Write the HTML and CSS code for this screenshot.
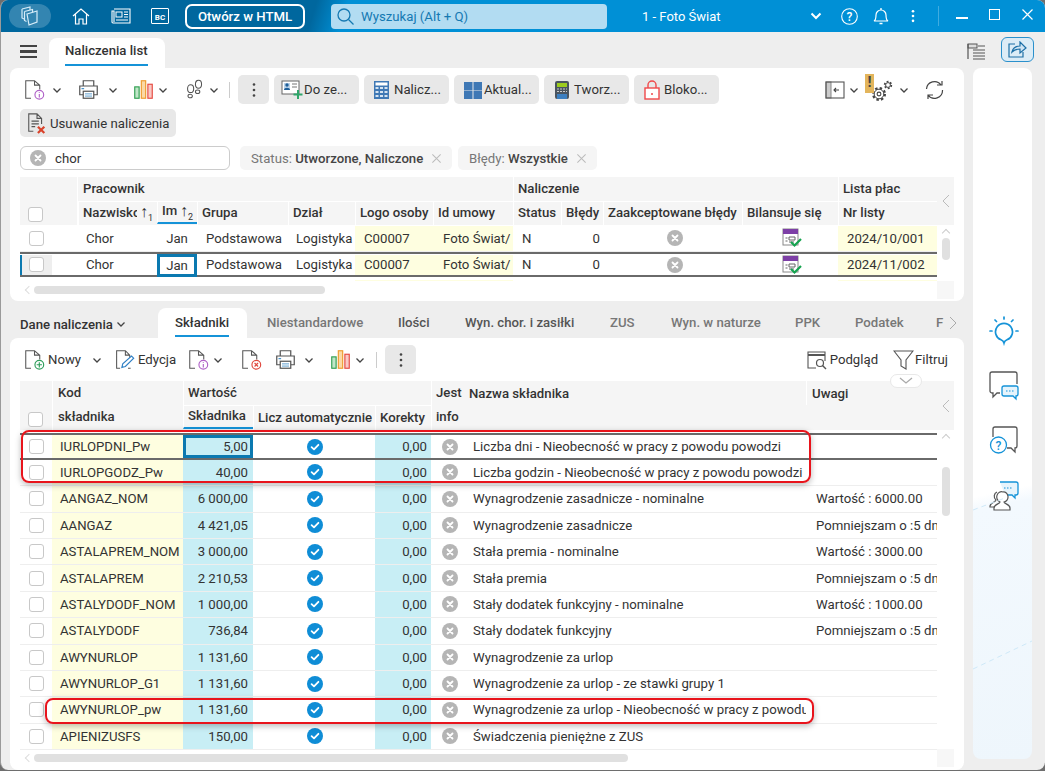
FILE: index.html
```html
<!DOCTYPE html>
<html lang="pl">
<head>
<meta charset="utf-8">
<title>Naliczenia list</title>
<link rel="stylesheet" href="styles.css">
</head>
<body>
<svg class="defs" width="0" height="0" aria-hidden="true">
  <symbol id="chev" viewBox="0 0 10 10"><path d="M1.500 3.500 5 7l3.500-3.500" fill="none" stroke="#444" stroke-width="1.300"/></symbol>
  <symbol id="xc" viewBox="0 0 16 16"><circle cx="8" cy="8" r="8" fill="#b5b5b5"/><path d="M5.500 5.500l5 5m0-5l-5 5" stroke="#fff" stroke-width="1.800" stroke-linecap="round"/></symbol>
  <symbol id="ok" viewBox="0 0 16 16"><circle cx="8" cy="8" r="8" fill="#0f8dd6"/><path d="M4.600 8.200 7 10.400l4.400-4.600" fill="none" stroke="#fff" stroke-width="1.800" stroke-linecap="round" stroke-linejoin="round"/></symbol>
  <symbol id="docinfo" viewBox="0 0 24 24"><path d="M8 22H2V2h10l6 5v5M12 2v5h6" fill="none" stroke="#555" stroke-width="1.200"/><circle cx="17.500" cy="18" r="5" fill="#fff" stroke="#b062c8" stroke-width="1.300"/><path d="M17.500 17v4M17.500 15v1" stroke="#b062c8" stroke-width="1.300"/></symbol>
  <symbol id="docplus" viewBox="0 0 24 24"><path d="M8 22H2V2h10l6 5v5M12 2v5h6" fill="none" stroke="#555" stroke-width="1.200"/><circle cx="17.500" cy="18" r="5" fill="#fff" stroke="#2f9e5b" stroke-width="1.300"/><path d="M17.500 15v6M14.500 18h6" stroke="#2f9e5b" stroke-width="1.300"/></symbol>
  <symbol id="docx" viewBox="0 0 24 24"><path d="M8 22H2V2h10l6 5v5M12 2v5h6" fill="none" stroke="#555" stroke-width="1.200"/><circle cx="17.500" cy="18" r="5" fill="#fff" stroke="#e0483e" stroke-width="1.300"/><path d="M15.500 16l4 4m0-4l-4 4" stroke="#e0483e" stroke-width="1.300"/></symbol>
  <symbol id="docedit" viewBox="0 0 24 24"><path d="M7 22H3V2h10l5 5v4M13 2v5h5M16 22h3" fill="none" stroke="#555" stroke-width="1.200"/><path d="M9 21l1-4L20 8l2.500 2.500L13 20z" fill="#fff" stroke="#2f7fc4" stroke-width="1.300"/></symbol>
  <symbol id="print" viewBox="0 0 24 24"><path d="M6 8V2h12v6M6 18H2V8h20v10h-4" fill="none" stroke="#555" stroke-width="1.400"/><rect x="6" y="14" width="12" height="8" fill="#fff" stroke="#555" stroke-width="1.400"/><path d="M8 17h8M8 19.500h8" stroke="#4a93c9"/><path d="M4 11h3" stroke="#4a93c9" stroke-width="1.400"/></symbol>
  <symbol id="chart" viewBox="0 0 24 24"><rect x="2" y="9" width="5" height="13" fill="#bfe6c8" stroke="#2f9e4f" stroke-width="1.300"/><rect x="9.500" y="2" width="5" height="20" fill="#fbd9a6" stroke="#ef9a2b" stroke-width="1.300"/><rect x="17" y="6" width="5" height="16" fill="#f9c9c5" stroke="#e5483f" stroke-width="1.300"/></symbol>
  <symbol id="steps" viewBox="0 0 20 24"><g fill="none" stroke="#555" stroke-width="1.200"><ellipse cx="5" cy="11" rx="3.500" ry="4.500"/><ellipse cx="14" cy="6" rx="3.500" ry="4.500"/><ellipse cx="4.500" cy="19.500" rx="2.500" ry="2"/><ellipse cx="13" cy="14.500" rx="2.500" ry="2"/></g></symbol>
  <symbol id="kebab" viewBox="0 0 4 16"><circle cx="2" cy="2.500" r="1.300" fill="#444"/><circle cx="2" cy="8" r="1.300" fill="#444"/><circle cx="2" cy="13.500" r="1.300" fill="#444"/></symbol>
  <symbol id="close" viewBox="0 0 12 12"><path d="M1.500 1.500l9 9m0-9l-9 9" stroke="#bbb" stroke-width="1.100"/></symbol>
  <symbol id="bil" viewBox="0 0 20 20"><rect x="1" y="1" width="15" height="16" fill="#fff" stroke="#888"/><rect x="1" y="1" width="15" height="5" fill="#7d3fa6"/><path d="M3.500 10h2M3.500 13h2M7 9h6v3H7zM7 14h5" fill="none" stroke="#666"/><path d="M9 14l3.500 3.500L19 11" fill="none" stroke="#15a34f" stroke-width="2.200"/></symbol>
</svg>

<div class="window">
  <header class="titlebar">
    <span class="brand"><svg width="22" height="20" viewBox="0 0 22 20"><g fill="none" stroke="#d6ecf8" stroke-width="1.200"><path d="M3 3l8-2v3M3 3v9l2 1"/><path d="M5.500 5.500l8-2v3M5.500 5.500v9l2 1"/><path d="M8 8l10-3v11l-8 3z"/></g></svg></span>
    <span class="ticon home"><svg width="18" height="18" viewBox="0 0 18 18"><path d="M1 9l8-7 8 7M3.500 7.500V17h3.500v-5h4v5h3.500V7.500" fill="none" stroke="#fff" stroke-width="1.200"/></svg></span>
    <span class="ticon news"><svg width="20" height="16" viewBox="0 0 20 16"><path d="M3 1h16v14H2a1 1 0 0 1-1-1V3h2v11" fill="none" stroke="#fff" stroke-width="1.100"/><rect x="5" y="4" width="6" height="5" fill="none" stroke="#fff"/><path d="M13 4h4M13 6.500h4M13 9h4M5 12h12" stroke="#fff"/></svg></span>
    <span class="bc">BC</span>
    <button class="html-btn">Otwórz w HTML</button>
    <div class="global-search"><svg width="17" height="17" viewBox="0 0 17 17"><circle cx="7" cy="7" r="6" fill="none" stroke="#1579b2" stroke-width="1.300"/><path d="M11.500 11.500l5 5" stroke="#1579b2" stroke-width="1.300"/></svg><span>Wyszukaj (Alt + Q)</span></div>
    <span class="company">1 - Foto Świat</span>
    <svg class="tchev" width="12" height="8" viewBox="0 0 12 8"><path d="M1.500 1.500 6 6l4.500-4.500" fill="none" stroke="#fff" stroke-width="2"/></svg>
    <svg class="thelp" width="17" height="17" viewBox="0 0 17 17"><circle cx="8.500" cy="8.500" r="7.800" fill="none" stroke="#fff" stroke-width="1.100"/><text x="8.500" y="12.500" text-anchor="middle" class="qm">?</text></svg>
    <svg class="tbell" width="16" height="18" viewBox="0 0 16 18"><path d="M1 14c2-1 2-3 2-6a5 5 0 0 1 10 0c0 3 0 5 2 6z" fill="none" stroke="#fff" stroke-width="1.200"/><path d="M8 1v2M6.500 16.500h3" stroke="#fff" stroke-width="1.300"/></svg>
    <svg class="tkeb" width="4" height="14" viewBox="0 0 4 16"><circle cx="2" cy="2.500" r="1.500" fill="#fff"/><circle cx="2" cy="8" r="1.500" fill="#fff"/><circle cx="2" cy="13.500" r="1.500" fill="#fff"/></svg>
    <span class="tsep"></span>
    <span class="wmin"></span>
    <span class="wmax"></span>
    <svg class="wclose" width="11" height="11" viewBox="0 0 11 11"><path d="M.5.500l10 10m0-10l-10 10" stroke="#fff" stroke-width="1.200"/></svg>
  </header>

  <div class="workspace">
    <main class="content">
      <div class="pagetabs">
        <span class="burger"><i></i><i></i><i></i></span>
        <span class="pagetab"><b>Naliczenia list</b></span>
        <svg class="listicon" width="18" height="17" viewBox="0 0 18 17"><rect x="1" y="1" width="9" height="4" fill="#ddd" stroke="#555"/><path d="M1 1v15M6 7h12M6 10h12M6 13h12M6 16h12M11 3h7" stroke="#555" stroke-width="1.200"/></svg>
        <span class="sharebtn"><svg width="19" height="17" viewBox="0 0 19 17"><path d="M7 3H1v13h14v-5" fill="none" stroke="#1c6fa6" stroke-width="1.200"/><path d="M4 11c1-4 4-6 8-6V1l6 6-6 5V8c-3 0-6 1-8 3z" fill="#cfe4f3" stroke="#1c6fa6" stroke-width="1.200"/></svg></span>
      </div>

      <section class="panel top-panel">
        <div class="toolbar t1">
          <span class="tool w-info"><svg class="i20"><use href="#docinfo"/></svg><svg class="chv"><use href="#chev"/></svg></span>
          <span class="tool w-print"><svg class="i20"><use href="#print"/></svg><svg class="chv"><use href="#chev"/></svg></span>
          <span class="tool w-chart"><svg class="i20"><use href="#chart"/></svg><svg class="chv"><use href="#chev"/></svg></span>
          <span class="tool w-steps"><svg class="i20"><use href="#steps"/></svg><svg class="chv"><use href="#chev"/></svg></span>
          <span class="vsep"></span>
          <span class="gbtn kebab"><svg width="4" height="16"><use href="#kebab"/></svg></span>
          <span class="gbtn act"><svg width="22" height="20" viewBox="0 0 22 20"><rect x="1" y="1" width="17" height="13" fill="#fff" stroke="#666"/><rect x="3" y="3" width="6" height="7" fill="#bcd4ea"/><circle cx="6" cy="5" r="1.700" fill="#1f5f99"/><path d="M3 10c0-3 6-3 6 0z" fill="#1f5f99"/><path d="M11 4h5M11 7h5" stroke="#777"/><path d="M17 10v9M12.500 14.500h9" stroke="#2fa66a" stroke-width="2"/></svg><span>Do ze...</span></span>
          <span class="gbtn act"><svg width="19" height="20" viewBox="0 0 19 20"><rect x="1" y="1" width="15" height="18" fill="#3f78b5"/><rect x="2.500" y="2.500" width="12" height="3" fill="#fff"/><path d="M2.500 8h12M2.500 12h12M2.500 16h12" stroke="#d5e3f1" stroke-width="2" stroke-dasharray="3 1.500"/></svg><span>Nalicz...</span></span>
          <span class="gbtn act"><svg width="19" height="18" viewBox="0 0 19 18"><rect width="8.500" height="8.500" x="1" y="1" fill="#3f78b5"/><rect width="8.500" height="8.500" x="10.500" y="1" fill="#3f78b5"/><rect width="8.500" height="8.500" x="1" y="10" fill="#3f78b5"/><rect width="8.500" height="8.500" x="10.500" y="10" fill="#3f78b5"/></svg><span>Aktual...</span></span>
          <span class="gbtn act"><svg width="19" height="20" viewBox="0 0 19 20"><rect x="2" y="1" width="14" height="18" rx="2" fill="#4a5560"/><rect x="4" y="3" width="10" height="4" fill="#9ccc1e"/><path d="M4 9h10M4 11.500h10" stroke="#ccc" stroke-dasharray="2 1"/><rect x="4" y="14" width="10" height="5" fill="#3c7fc0"/></svg><span>Tworz...</span></span>
          <span class="gbtn act"><svg width="19" height="20" viewBox="0 0 19 20"><rect x="2" y="8" width="14" height="11" fill="#fff" stroke="#f0494a" stroke-width="1.400"/><path d="M5 8V5a4 4 0 0 1 8 0v3" fill="none" stroke="#f0494a" stroke-width="1.400"/><circle cx="9" cy="14" r="1" fill="#f0494a"/></svg><span>Bloko...</span></span>
          <span class="right-tools">
            <span class="tool w-col"><svg width="20" height="18" viewBox="0 0 20 18"><rect x="1" y="1" width="5" height="16" fill="#ccc" stroke="#888"/><rect x="1" y="1" width="18" height="16" fill="none" stroke="#555" stroke-width="1.100"/><path d="M14 9H9m2-2-2 2 2 2" fill="none" stroke="#444" stroke-width="1.100"/></svg><svg class="chv"><use href="#chev"/></svg></span>
            <span class="tool w-gear"><span class="warn">!</span><svg class="gear" width="22" height="22" viewBox="0 0 22 22"><g fill="none" stroke="#444"><circle cx="8" cy="14" r="5.800" stroke-width="2.400" stroke-dasharray="2.400 2.150"/><circle cx="8" cy="14" r="4.800" stroke-width="1" fill="#fff"/><circle cx="8" cy="14" r="1.900" stroke-width="1.100"/><circle cx="17" cy="5" r="3.300" stroke-width="1.800" stroke-dasharray="1.800 1.650"/><circle cx="17" cy="5" r="2.400" stroke-width="1" fill="#fff"/></g></svg><svg class="chv"><use href="#chev"/></svg></span>
            <svg class="refresh" width="20" height="20" viewBox="0 0 20 20"><path d="M1.500 9A8 8 0 0 1 16 5m1.500 5A8 8 0 0 1 3 15M12 5h5V1M8 15H3v4" fill="none" stroke="#444" stroke-width="1.200"/></svg>
          </span>
        </div>
        <div class="toolbar t1b">
          <span class="gbtn wide"><svg width="24" height="22" viewBox="0 0 24 24"><path d="M8 21H3V2h9l5 5v6M12 2v5h5M6 10h8M6 13h8M6 16h4" fill="none" stroke="#555" stroke-width="1.200"/><path d="M13 16l7 7m0-7l-7 7" stroke="#d9432b" stroke-width="2.400"/></svg><span>Usuwanie naliczenia</span></span>
        </div>
        <div class="filters">
          <div class="searchbox"><svg width="16" height="16"><use href="#xc"/></svg><span>chor</span></div>
          <span class="chip c-status">Status: <b>Utworzone, Naliczone</b><svg width="11" height="11"><use href="#close"/></svg></span>
          <span class="chip c-err">Błędy: <b>Wszystkie</b><svg width="11" height="11"><use href="#close"/></svg></span>
        </div>

        <div class="tbl tbl1">
          <div class="side">
            <div class="thead cols1">
              <div class="th chk-h"><span class="cb"></span></div>
              <div class="th blank-h"></div>
              <div class="th grp g-prac">Pracownik</div>
              <div class="th grp g-nal">Naliczenie</div>
              <div class="th grp g-lista">Lista płac</div>
              <div class="th sub sort"><span class="clip">Nazwisko</span><span class="arr">↑<sub>1</sub></span></div>
              <div class="th sub sort on"><span class="clip">Im</span><span class="arr">↑<sub>2</sub></span></div>
              <div class="th sub">Grupa</div>
              <div class="th sub">Dział</div>
              <div class="th sub">Logo osoby</div>
              <div class="th sub">Id umowy</div>
              <div class="th sub">Status</div>
              <div class="th sub">Błędy</div>
              <div class="th sub">Zaakceptowane błędy</div>
              <div class="th sub">Bilansuje się</div>
              <div class="th sub">Nr listy</div>
            </div>
            <div class="rows rows1">
              <div class="row cols1">
                <div class="td cc"><span class="cb"></span></div><div class="td"></div><div class="td">Chor</div><div class="td tc">Jan</div><div class="td">Podstawowa</div><div class="td">Logistyka</div><div class="td y">C00007</div><div class="td y">Foto Świat/</div><div class="td">N</div><div class="td r">0</div><div class="td cc ico-x"><svg width="16" height="16"><use href="#xc"/></svg></div><div class="td cc ico-b"><svg width="20" height="20"><use href="#bil"/></svg></div><div class="td y">2024/10/001</div>
              </div>
              <div class="row cols1 sel">
                <div class="td cc mark"><span class="cb"></span></div><div class="td"></div><div class="td">Chor</div><div class="td tc focus">Jan</div><div class="td">Podstawowa</div><div class="td">Logistyka</div><div class="td y">C00007</div><div class="td y">Foto Świat/</div><div class="td">N</div><div class="td r">0</div><div class="td cc ico-x"><svg width="16" height="16"><use href="#xc"/></svg></div><div class="td cc ico-b"><svg width="20" height="20"><use href="#bil"/></svg></div><div class="td y">2024/11/002</div>
              </div>
              <div class="row cols1">
                <div class="td cc"></div><div class="td"></div><div class="td"></div><div class="td"></div><div class="td"></div><div class="td"></div><div class="td y"></div><div class="td y"></div><div class="td"></div><div class="td"></div><div class="td"></div><div class="td cc ico-b"><svg width="20" height="20" class="faded"><use href="#bil"/></svg></div><div class="td y"></div>
              </div>
            </div>
          </div>
          <div class="vbar">
            <div class="vhead"><svg width="8" height="14" viewBox="0 0 8 14"><path d="M7 1 1 7l6 6" fill="none" stroke="#bbb"/></svg></div>
            <div class="vtrack v1"><span class="up"></span><span class="thumb"></span></div>
          </div>
        </div>
        <div class="hbar"><span class="lt"></span><span class="hthumb h1"></span><span class="rt"></span></div>
      </section>

      <div class="subtabs">
        <span class="dane">Dane naliczenia<svg width="10" height="10"><use href="#chev"/></svg></span>
        <span class="stab active"><b>Składniki</b></span>
        <span class="stab w1">Niestandardowe</span>
        <span class="stab w2">Ilości</span>
        <span class="stab w3">Wyn. chor. i zasiłki</span>
        <span class="stab w4">ZUS</span>
        <span class="stab w5">Wyn. w naturze</span>
        <span class="stab w6">PPK</span>
        <span class="stab w7">Podatek</span>
        <span class="stab w8">F</span>
        <svg class="snext" width="8" height="14" viewBox="0 0 8 14"><path d="M1 1l6 6-6 6" fill="none" stroke="#aaa"/></svg>
      </div>

      <section class="panel bottom-panel">
        <div class="toolbar t2">
          <span class="tool nowy"><svg class="i20"><use href="#docplus"/></svg><span>Nowy</span><svg class="chv"><use href="#chev"/></svg></span>
          <span class="tool edy"><svg class="i20"><use href="#docedit"/></svg><span>Edycja</span></span>
          <span class="tool w-info2"><svg class="i20"><use href="#docinfo"/></svg><svg class="chv"><use href="#chev"/></svg></span>
          <span class="tool w-x"><svg class="i20"><use href="#docx"/></svg></span>
          <span class="tool w-print2"><svg class="i20"><use href="#print"/></svg><svg class="chv"><use href="#chev"/></svg></span>
          <span class="tool w-chart2"><svg class="i20"><use href="#chart"/></svg><svg class="chv"><use href="#chev"/></svg></span>
          <span class="vsep"></span>
          <span class="gbtn kebab"><svg width="4" height="16"><use href="#kebab"/></svg></span>
          <span class="right-tools r2">
            <span class="tool pod"><svg width="20" height="20" viewBox="0 0 20 20"><path d="M9 18H1V2h17v9" fill="none" stroke="#555" stroke-width="1.100"/><path d="M1 5h17" stroke="#555" stroke-width="2"/><circle cx="13" cy="13" r="3.500" fill="none" stroke="#555" stroke-width="1.200"/><path d="M15.500 15.500 19 19" stroke="#555" stroke-width="1.400"/></svg><span>Podgląd</span></span>
            <span class="tool fil"><svg width="21" height="20" viewBox="0 0 21 20"><path d="M1 1h19l-7 9v9l-5-3v-6z" fill="none" stroke="#555" stroke-width="1.100"/></svg><span>Filtruj</span></span>
          </span>
        </div>
        <span class="pill"><svg width="14" height="8" viewBox="0 0 14 8"><path d="M1 1l6 5 6-5" fill="none" stroke="#aaa" stroke-width="1.300"/></svg></span>

        <div class="tbl tbl2">
          <div class="side">
            <div class="thead cols2">
              <div class="th chk-h2"><span class="cb"></span></div>
              <div class="th kod">Kod<br>składnika</div>
              <div class="th grp g-war">Wartość</div>
              <div class="th jest">Jest<br>info</div>
              <div class="th grp2 nazwa">Nazwa składnika</div>
              <div class="th grp2 uwagi">Uwagi</div>
              <div class="th sub sk on">Składnika</div>
              <div class="th sub">Licz automatycznie</div>
              <div class="th sub">Korekty</div>
            </div>
            <div class="rows rows2">
              <div class="row cols2 sel2"><div class="td cc"><span class="cb"></span></div><div class="td y">IURLOPDNI_Pw</div><div class="td b r focus2">5,00</div><div class="td cc"><svg width="16" height="16"><use href="#ok"/></svg></div><div class="td b r">0,00</div><div class="td cc"><svg width="16" height="16"><use href="#xc"/></svg></div><div class="td">Liczba dni - Nieobecność w pracy z powodu powodzi</div><div class="td"></div></div>
              <div class="row cols2"><div class="td cc"><span class="cb"></span></div><div class="td y">IURLOPGODZ_Pw</div><div class="td b r">40,00</div><div class="td cc"><svg width="16" height="16"><use href="#ok"/></svg></div><div class="td b r">0,00</div><div class="td cc"><svg width="16" height="16"><use href="#xc"/></svg></div><div class="td">Liczba godzin - Nieobecność w pracy z powodu powodzi</div><div class="td"></div></div>
              <div class="row cols2"><div class="td cc"><span class="cb"></span></div><div class="td y">AANGAZ_NOM</div><div class="td b r">6 000,00</div><div class="td cc"><svg width="16" height="16"><use href="#ok"/></svg></div><div class="td b r">0,00</div><div class="td cc"><svg width="16" height="16"><use href="#xc"/></svg></div><div class="td">Wynagrodzenie zasadnicze - nominalne</div><div class="td">Wartość : 6000.00</div></div>
              <div class="row cols2"><div class="td cc"><span class="cb"></span></div><div class="td y">AANGAZ</div><div class="td b r">4 421,05</div><div class="td cc"><svg width="16" height="16"><use href="#ok"/></svg></div><div class="td b r">0,00</div><div class="td cc"><svg width="16" height="16"><use href="#xc"/></svg></div><div class="td">Wynagrodzenie zasadnicze</div><div class="td">Pomniejszam o :5 dni</div></div>
              <div class="row cols2"><div class="td cc"><span class="cb"></span></div><div class="td y">ASTALAPREM_NOM</div><div class="td b r">3 000,00</div><div class="td cc"><svg width="16" height="16"><use href="#ok"/></svg></div><div class="td b r">0,00</div><div class="td cc"><svg width="16" height="16"><use href="#xc"/></svg></div><div class="td">Stała premia - nominalne</div><div class="td">Wartość : 3000.00</div></div>
              <div class="row cols2"><div class="td cc"><span class="cb"></span></div><div class="td y">ASTALAPREM</div><div class="td b r">2 210,53</div><div class="td cc"><svg width="16" height="16"><use href="#ok"/></svg></div><div class="td b r">0,00</div><div class="td cc"><svg width="16" height="16"><use href="#xc"/></svg></div><div class="td">Stała premia</div><div class="td">Pomniejszam o :5 dni</div></div>
              <div class="row cols2"><div class="td cc"><span class="cb"></span></div><div class="td y">ASTALYDODF_NOM</div><div class="td b r">1 000,00</div><div class="td cc"><svg width="16" height="16"><use href="#ok"/></svg></div><div class="td b r">0,00</div><div class="td cc"><svg width="16" height="16"><use href="#xc"/></svg></div><div class="td">Stały dodatek funkcyjny - nominalne</div><div class="td">Wartość : 1000.00</div></div>
              <div class="row cols2"><div class="td cc"><span class="cb"></span></div><div class="td y">ASTALYDODF</div><div class="td b r">736,84</div><div class="td cc"><svg width="16" height="16"><use href="#ok"/></svg></div><div class="td b r">0,00</div><div class="td cc"><svg width="16" height="16"><use href="#xc"/></svg></div><div class="td">Stały dodatek funkcyjny</div><div class="td">Pomniejszam o :5 dni</div></div>
              <div class="row cols2"><div class="td cc"><span class="cb"></span></div><div class="td y">AWYNURLOP</div><div class="td b r">1 131,60</div><div class="td cc"><svg width="16" height="16"><use href="#ok"/></svg></div><div class="td b r">0,00</div><div class="td cc"><svg width="16" height="16"><use href="#xc"/></svg></div><div class="td">Wynagrodzenie za urlop</div><div class="td"></div></div>
              <div class="row cols2"><div class="td cc"><span class="cb"></span></div><div class="td y">AWYNURLOP_G1</div><div class="td b r">1 131,60</div><div class="td cc"><svg width="16" height="16"><use href="#ok"/></svg></div><div class="td b r">0,00</div><div class="td cc"><svg width="16" height="16"><use href="#xc"/></svg></div><div class="td">Wynagrodzenie za urlop - ze stawki grupy 1</div><div class="td"></div></div>
              <div class="row cols2"><div class="td cc"><span class="cb"></span></div><div class="td y">AWYNURLOP_pw</div><div class="td b r">1 131,60</div><div class="td cc"><svg width="16" height="16"><use href="#ok"/></svg></div><div class="td b r">0,00</div><div class="td cc"><svg width="16" height="16"><use href="#xc"/></svg></div><div class="td">Wynagrodzenie za urlop - Nieobecność w pracy z powodu powodzi</div><div class="td"></div></div>
              <div class="row cols2"><div class="td cc"><span class="cb"></span></div><div class="td y">APIENIZUSFS</div><div class="td b r">150,00</div><div class="td cc"><svg width="16" height="16"><use href="#ok"/></svg></div><div class="td b r">0,00</div><div class="td cc"><svg width="16" height="16"><use href="#xc"/></svg></div><div class="td">Świadczenia pieniężne z ZUS</div><div class="td"></div></div>
            </div>
            <span class="mark-box box-a"></span>
            <span class="mark-box box-b"></span>
          </div>
          <div class="vbar">
            <div class="vhead h2"><svg width="8" height="14" viewBox="0 0 8 14"><path d="M7 1 1 7l6 6" fill="none" stroke="#bbb"/></svg></div>
            <div class="vtrack v2"><span class="up"></span><span class="thumb"></span></div>
          </div>
        </div>
        <div class="hbar"><span class="lt"></span><span class="hthumb h2"></span><span class="rt"></span></div>
      </section>
    </main>

    <aside class="rail">
      <svg class="r-bulb" width="30" height="30" viewBox="0 0 30 30"><g fill="none" stroke="#1593d8" stroke-width="1.700" stroke-linecap="round"><path d="M15 27c-.5-1.800-1.200-2.500-3-3.200A8.500 8.500 0 1 1 18 23.800c-1.800.7-2.500 1.400-3 3.200z"/><path d="M15 1v2M6 4l1.500 1.500M24 4l-1.500 1.500M1 15h2M27 15h2"/></g></svg>
      <svg class="r-chat" width="30" height="30" viewBox="0 0 30 30"><path d="M11 22H8l-4 4v-4H3a2 2 0 0 1-2-2V3a2 2 0 0 1 2-2h23a2 2 0 0 1 2 2v10" fill="none" stroke="#555" stroke-width="1.300"/><path d="M15 15h12a2 2 0 0 1 2 2v6a2 2 0 0 1-2 2v3l-3-3h-9a2 2 0 0 1-2-2v-6a2 2 0 0 1 2-2z" fill="#e6f4fc" stroke="#1593d8" stroke-width="1.300"/><path d="M17 20h8" stroke="#1593d8" stroke-dasharray="1.500 1.500"/></svg>
      <svg class="r-help" width="30" height="30" viewBox="0 0 30 30"><path d="M4 11V3a2 2 0 0 1 2-2h20a2 2 0 0 1 2 2v17a2 2 0 0 1-2 2v4l-4-4h-4" fill="none" stroke="#555" stroke-width="1.300"/><circle cx="9.500" cy="19" r="8" fill="#fff" stroke="#1593d8" stroke-width="1.300"/><text x="9.500" y="23.500" text-anchor="middle" class="rq">?</text></svg>
      <svg class="r-user" width="30" height="32" viewBox="0 0 30 32"><path d="M11 1h16a2 2 0 0 1 2 2v9a2 2 0 0 1-2 2h-1v3l-3-3H16" fill="#e6f4fc" stroke="#1593d8" stroke-width="1.300"/><path d="M15 7h8" stroke="#1593d8" stroke-dasharray="1.500 1.500"/><path d="M8 11a4 4.500 0 0 0-1 8c0 2-5 2-6 6v1h6" fill="#fff" stroke="#555" stroke-width="1.200"/><path d="M14 11a4.500 5 0 0 1 1 10c0 2 6 2 6 6v2H5v-2c0-4 6-4 6-6a4.500 5 0 0 1 3-10z" fill="#fff" stroke="#555" stroke-width="1.200"/></svg>
      <svg class="r-dash" width="59" height="200" viewBox="0 0 59 200"><path d="M0 12 32 0M0 171 59 143" stroke="#cfe9f8" stroke-dasharray="5 4" fill="none"/></svg>
    </aside>
  </div>
</div>
</body>
</html>
```
FILE: styles.css
```css
* { box-sizing: border-box; }
html, body { margin: 0; height: 100%; overflow: hidden; }
body {
  background: #6e6e6e;
  font-family: Roboto, "Liberation Sans", sans-serif;
  font-size: 13.200px;
  color: #333;
}
.defs { position: absolute; }
.window {
  width: 1045px;
  height: 770px;
  background: #eeeeee;
  border-radius: 8px;
  overflow: hidden;
  border-left: 1px solid #9a9a9a;
  display: flex;
  flex-direction: column;
}

/* title bar */
.titlebar {
  height: 32px;
  flex: none;
  display: flex;
  align-items: center;
  color: #fff;
  background: linear-gradient(107deg, #00679e 0, #00679e 30%, #0090d6 33%);
}
.brand {
  width: 42px; height: 24px; margin-left: 8px;
  border-radius: 12px;
  background: rgba(255, 255, 255, .2);
  display: flex; align-items: center; justify-content: center;
}
.ticon { display: flex; }
.home { margin-left: 21px; }
.news { margin-left: 21px; }
.bc {
  margin-left: 20px; width: 18px; height: 16px;
  border: 1px solid #fff; border-radius: 1px;
  font-size: 8px; font-weight: 700;
  display: flex; align-items: flex-end; justify-content: center;
  padding-bottom: 1px;
}
.html-btn {
  margin-left: 16px; width: 120px; height: 25px;
  background: transparent; color: #fff;
  border: 2px solid #fff; border-radius: 7px;
  font: 500 13.200px Roboto, sans-serif;
  padding: 0;
}
.global-search {
  margin-left: 26px; width: 276px; height: 25px;
  background: #b2dcf2; border-radius: 4px;
  display: flex; align-items: center; gap: 7px;
  padding-left: 6px;
  color: #1579b2; font-size: 13.200px;
}
.company { margin-left: 35px; width: 168px; font-size: 13px; color: #fff; }
.tchev { flex: none; }
.thelp { margin-left: 19px; }
.qm { font: 500 12px Roboto, sans-serif; fill: #fff; }
.tbell { margin-left: 15px; }
.tkeb { margin-left: 22px; }
.tsep { margin-left: 23px; width: 1px; height: 20px; background: rgba(255,255,255,.25); }
.wmin { margin-left: 17px; width: 12px; height: 2px; background: #fff; margin-top: 4px; }
.wmax { margin-left: 21px; width: 11px; height: 11px; border: 1px solid #fff; margin-top: -4px; }
.wclose { margin-left: 22px; margin-top: -3px; }

/* workspace */
.workspace { flex: 1; display: flex; min-height: 0; }
.content { width: 972px; padding: 0 9px 0 9px; display: flex; flex-direction: column; }
.pagetabs { height: 36px; display: flex; align-items: flex-end; position: relative; }
.burger { width: 17px; display: flex; flex-direction: column; gap: 3px; margin: 0 0 10px 10px; }
.burger i { height: 2.500px; background: #444; }
.pagetab {
  margin-left: 12px; width: 116px; height: 30px;
  background: #fff; border-radius: 8px 8px 0 0;
  padding-left: 16px;
}
.pagetab b {
  display: inline-block; height: 28px; line-height: 26px;
  font-weight: 500; color: #333;
  border-bottom: 2px solid #1593d8;
}
.listicon { margin: 0 15px 8px auto; position: relative; left: 2px; }
.sharebtn {
  width: 33px; height: 25px; margin: 0 -67px 6px 0; position: relative; left: 3px;
  border: 1.500px solid #2a90cc; border-radius: 6px; background: #dcecf6;
  display: flex; align-items: center; justify-content: center;
  flex: none;
}
.panel { background: #fff; border-radius: 8px; padding: 0 10px; }
.top-panel { height: 233px; padding-top: 7px; }
.bottom-panel { flex: 1; padding-top: 7px; position: relative; }

.toolbar { display: flex; align-items: center; }
.t1 { height: 29px; }
.t1b { height: 28px; margin-top: 5px; }
.tool { display: flex; align-items: center; height: 29px; flex: none; }
.i20 { width: 21px; height: 21px; flex: none; }
.chv { width: 10px; height: 10px; flex: none; }
.w-info { width: 58px; padding-left: 4px; gap: 7px; }
.w-print { width: 55px; gap: 9px; }
.w-chart { width: 53px; gap: 4px; }
.w-steps { width: 43px; gap: 5px; }
.w-steps .i20 { width: 18px; }
.vsep { width: 1px; height: 16px; background: #ccc; flex: none; }
.gbtn {
  height: 29px; background: #e8e8e8; border-radius: 5px;
  display: flex; align-items: center; flex: none;
}
.kebab { width: 31px; justify-content: center; margin-left: 8px; }
.act {
  width: 85px; margin-left: 5px; padding-left: 6px;
  display: grid; grid-template-columns: 24px 1fr; white-space: nowrap;
}
.act svg { justify-self: center; }
.wide { width: 156px; padding-left: 5px; gap: 1px; height: 28px; }
.right-tools { margin-left: auto; display: flex; align-items: center; }
.t1 .right-tools { margin-right: 9px; }
.w-col { width: 40px; gap: 4px; }
.w-gear { width: 60px; gap: 6px; position: relative; padding-left: 6px; }
.gear { margin-top: 3px; }
.warn {
  position: absolute; left: 0; top: -1px; width: 9px; height: 19px; z-index: 1;
  background: #e3b55c; color: #444; font-weight: 700; font-size: 15px;
  line-height: 17px; text-align: center;
}
.refresh { flex: none; }

/* filters */
.filters { display: flex; gap: 10px; margin-top: 9px; height: 24px; }
.searchbox {
  width: 210px; border: 1px solid #ccc; border-radius: 6px;
  display: flex; align-items: center; gap: 9px; padding-left: 9px;
}
.chip {
  background: #f5f5f5; border-radius: 5px; color: #777;
  display: flex; align-items: center; padding-left: 11px; white-space: pre;
}
.chip b { font-weight: 500; color: #444; }
.chip svg { margin-left: 8px; }
.c-status { width: 212px; }
.c-err { width: 139px; margin-left: -4px; }

/* tables */
.tbl { display: flex; position: relative; }
.tbl1 { margin-top: 7px; height: 104px; overflow: hidden; }
.tbl2 { margin-top: 7px; height: 368px; }
.side { width: 917px; position: relative; flex: none; }
.vbar { width: 17px; flex: none; display: flex; flex-direction: column; }
.vhead { height: 48px; background: #f5f5f5; display: flex; align-items: center; justify-content: center; }
.vhead.h2 { height: 49px; }
.vtrack { position: relative; flex: 1; }
.thumb { position: absolute; left: 5px; width: 8px; background: #e0e0e0; border-radius: 4px; }
.v1 .thumb { top: 13px; height: 22px; }
.v2 .thumb { top: 37px; height: 49px; }
.up { position: absolute; left: 6px; top: 5px; width: 6px; height: 6px; border-left: 1px solid #ccc; border-top: 1px solid #ccc; transform: rotate(45deg); }

.thead { display: grid; background: #f5f5f5; font-weight: 500; }
.cols1 { grid-template-columns: 32px 26px 79px 40px 91px 67px 78px 80px 48px 42px 139px 96px 99px; }
.cols2 { grid-template-columns: 32px 131px 70px 122px 56px 34px 341px 131px; }
.tbl1 .thead { grid-template-rows: 24px 24px; }
.tbl2 .thead { grid-template-rows: 24px 25px; }
.th { padding-left: 5px; white-space: nowrap; overflow: hidden; display: flex; align-items: center; }
.grp { padding-bottom: 1px; }
.chk-h { grid-row: 1 / 3; grid-column: 1; align-items: flex-end; padding: 0 0 3px 8px; }
.blank-h { grid-row: 1 / 3; grid-column: 2; border-right: 1px solid #fff; }
.g-prac { grid-column: 3 / 9; }
.g-nal { grid-column: 9 / 13; border-left: 1px solid #fff; padding-left: 4px; }
.g-lista { grid-column: 13; border-left: 1px solid #fff; padding-left: 4px; }
.sub { border-top: 1px solid #fff; border-left: 1px solid #fff; padding-left: 4px; padding-bottom: 2px; position: relative; }
.tbl1 .sub { padding-bottom: 3px; }
.tbl1 .sub:nth-child(n+6) { grid-row: 2; }
.sort { padding-right: 0; justify-content: space-between; }
.clip { overflow: hidden; }
.arr { font-size: 16px; width: 20px; flex: none; font-weight: 400; padding-left: 3px; line-height: 18px; }
.arr sub { font-size: 9px; line-height: 0; }
.on { border-bottom: 2px solid #1593d8; margin-bottom: 1px; }

.chk-h2 { grid-row: 1 / 3; grid-column: 1; align-items: flex-end; padding: 0 0 3px 8px; }
.kod { grid-row: 1 / 3; grid-column: 2; display: block; line-height: 24px; border-left: 1px solid #fff; }
.g-war { grid-column: 3 / 6; grid-row: 1; border-left: 1px solid #fff; padding-left: 4px; }
.jest { grid-row: 1 / 3; grid-column: 6; display: block; line-height: 24px; border-left: 1px solid #fff; padding-left: 4px; }
.nazwa { grid-column: 7; grid-row: 1; padding-left: 4px; }
.uwagi { grid-column: 8; grid-row: 1; border-left: 1px solid #fff; }
.tbl2 .sk { grid-column: 3; grid-row: 2; }
.tbl2 .sub { grid-row: 2; }
.tbl2 .sub.sk + .sub { grid-column: 4; }
.tbl2 .sub.sk + .sub + .sub { grid-column: 5; }

.rows1 { height: 56px; overflow: hidden; }
.rows2 { margin-top: 3.400px; }
.row { display: grid; border-bottom: 1px solid #eee; background: #fff; }
.rows1 .row { height: 26.500px; padding-top: 1px; }
.rows2 .row { height: 26.400px; }
.td {
  padding: 0 0 0 8px; white-space: nowrap; overflow: hidden;
  display: flex; align-items: center; color: #333;
}
.cc { justify-content: center; padding: 0; }
.tc { justify-content: center; padding: 0; }
.r { justify-content: flex-end; padding: 0 4px 0 0; }
.y { background: #fefee0; }
.b { background: #c8eef5; }
.faded { opacity: .5; margin-top: 24px; }
.rows1 .td { padding-left: 9px; }
.rows1 .td:nth-child(3), .rows1 .td:nth-child(6) { padding-left: 8px; }
.rows1 .td:nth-child(8) { padding-left: 10px; }
.rows1 .cc, .rows1 .tc { padding: 0; }
.rows1 .r { padding: 0 3px 0 0; }
.ico-x { padding-left: 5px !important; }
.ico-b { padding-left: 3px !important; }
.rows2 .td:nth-child(8) { padding-left: 10px; }
.rows2 .td:nth-child(3) { padding-right: 5px; }
.rows2 .td:nth-child(4) { padding-left: 2px; }
.rows2 .td:nth-child(6) { padding-left: 4px; }
.rows1 .row:last-child .td { align-items: flex-start; }
.rows1 .row:last-child svg { margin-top: 2px; }
.cb {
  width: 15px; height: 15px; display: inline-block; flex: none;
  border: 1px solid #c8c8c8; border-radius: 3px; background: #fff;
}
.sel { border-top: 2px solid #6a6a6a; border-bottom: 2px solid #6a6a6a; margin-bottom: 2px; height: 25px !important; padding-top: 1px; }
.mark { background: #eee; box-shadow: inset 2px 0 #0b79b0; }
.focus { border: 3px solid #0b79b0; margin: -1px 0 -2px; }
.sel2 { border-top: 2px solid #6a6a6a; border-bottom: 2px solid #6a6a6a; }
.rows2 .row .td.focus2 { border: 3px solid #0b79b0; padding-right: 2px; }

.hbar { height: 18px; position: relative; display: flex; align-items: center; }
.hthumb { position: absolute; left: 14px; height: 8px; background: #e0e0e0; border-radius: 4px; }
.hthumb.h1 { width: 291px; }
.hthumb.h2 { width: 594px; }
.lt { position: absolute; left: 6px; width: 6px; height: 6px; border-left: 1px solid #ddd; border-bottom: 1px solid #ddd; transform: rotate(45deg); }
.rt { position: absolute; left: 915px; width: 6px; height: 6px; border-right: 1px solid #ddd; border-top: 1px solid #ddd; transform: rotate(45deg); }
.hbar::after { content: ""; position: absolute; right: 0; top: 0; bottom: 0; width: 17px; background: #f7f7f7; }

/* sub tabs */
.subtabs { height: 37px; display: flex; align-items: flex-end; position: relative; white-space: nowrap; }
.dane { width: 148px; padding-left: 10px; font-weight: 500; height: 30px; display: flex; align-items: center; gap: 3px; margin-bottom: -1px; }
.stab { height: 30px; line-height: 30px; color: #777; font-weight: 500; flex: none; }
.stab.active { width: 89px; background: #fff; border-radius: 8px 8px 0 0; padding-left: 17px; margin-right: 20px; color: #333; }
.stab.active b { display: inline-block; height: 29px; font-weight: 500; border-bottom: 2px solid #1593d8; }
.w1 { width: 131px; }
.w2 { width: 67px; color: #555; }
.w3 { width: 145px; color: #555; }
.w4 { width: 61px; }
.w5 { width: 124px; }
.w6 { width: 60px; }
.w7 { width: 81px; }
.w8 { width: 10px; overflow: hidden; }
.snext { margin: 0 0 8px 3px; }

/* bottom toolbar */
.t2 { height: 29px; }
.nowy { width: 89px; padding-left: 4px; gap: 3px; }
.nowy .chv { margin-left: 8px; }
.edy { width: 79px; gap: 3px; padding-left: 5px; }
.w-info2 { width: 53px; gap: 4px; }
.w-x { width: 34px; }
.w-print2 { width: 55px; gap: 8px; }
.w-chart2 { width: 46px; gap: 4px; }
.r2 { gap: 15px; margin-right: 6px; }
.pod { gap: 3px; }
.fil { gap: 1px; }
.pill {
  position: absolute; left: 880px; top: 36px; width: 32px; height: 14px;
  background: #fff; border: 1px solid #e8e8e8; border-radius: 7px;
  display: flex; align-items: center; justify-content: center; z-index: 2;
}

.mark-box {
  position: absolute; border: 2px solid #e8141c; border-radius: 8px;
  box-shadow: 0 2px 6px rgba(0, 0, 0, .28); pointer-events: none; z-index: 3;
}
.box-a { left: 1px; top: 49px; width: 790px; height: 53px; }
.box-b { left: 25px; top: 317px; width: 769px; height: 26px; }

/* right rail */
.rail {
  width: 59px; height: 691px; margin-top: 36px; flex: none;
  background: linear-gradient(168deg, #fff 0, #fff 61%, #f3f9fe 63%, #eef6fc 100%);
  border-radius: 8px; position: relative;
  display: flex; flex-direction: column; align-items: center;
  padding: 248px 0 0 3px;
}
.rail svg { flex: none; }
.r-chat { margin-top: 25px; }
.r-help { margin-top: 25px; }
.r-user { margin-top: 25px; }
.r-dash { position: absolute; left: 0; top: 430px; }
.rq { font: 500 12px Roboto, sans-serif; fill: #1593d8; }
```
